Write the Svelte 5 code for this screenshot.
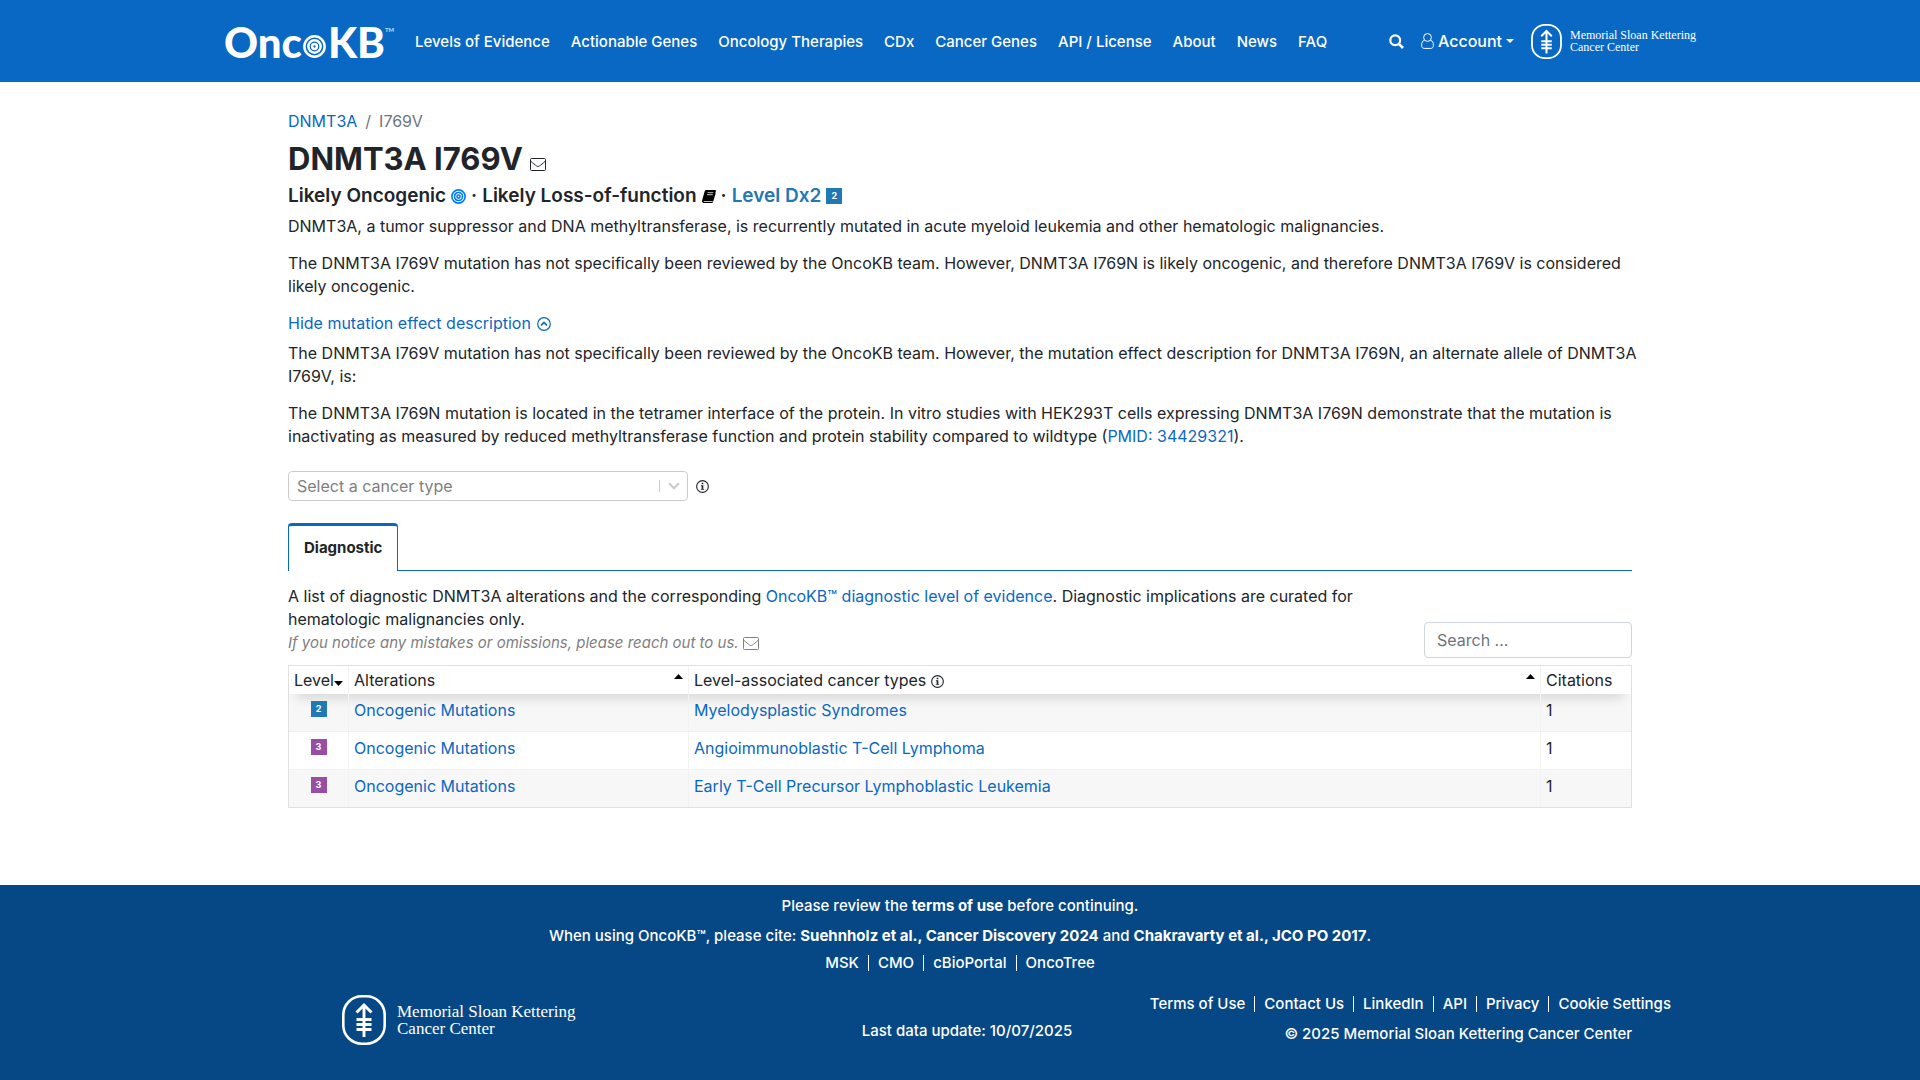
<script lang="ts">
    type Level = 2 | 3;

    const navLinks = [
        "Levels of Evidence",
        "Actionable Genes",
        "Oncology Therapies",
        "CDx",
        "Cancer Genes",
        "API / License",
        "About",
        "News",
        "FAQ",
    ];
    const partnerLinks = ["MSK", "CMO", "cBioPortal", "OncoTree"];
    const siteLinks = ["Terms of Use", "Contact Us", "LinkedIn", "API", "Privacy", "Cookie Settings"];

    const rows: { level: Level; alteration: string; cancerType: string; citations: number }[] = [
        { level: 2, alteration: "Oncogenic Mutations", cancerType: "Myelodysplastic Syndromes", citations: 1 },
        { level: 3, alteration: "Oncogenic Mutations", cancerType: "Angioimmunoblastic T-Cell Lymphoma", citations: 1 },
        { level: 3, alteration: "Oncogenic Mutations", cancerType: "Early T-Cell Precursor Lymphoblastic Leukemia", citations: 1 },
    ];

    let search = $state("");
    let showEffect = $state(true);

    const filtered = $derived(
        rows.filter((r) => (r.alteration + " " + r.cancerType).toLowerCase().includes(search.toLowerCase()))
    );
</script>

{#snippet target(size: number)}
    <svg class="target" width={size} height={size} viewBox="0 0 24 24" fill="none" stroke="currentColor" stroke-width="2.6" aria-hidden="true">
        <circle cx="12" cy="12" r="10.6" />
        <circle cx="12" cy="12" r="6.4" />
        <circle cx="12" cy="12" r="2.5" />
    </svg>
{/snippet}

{#snippet envelope()}
    <svg class="envelope" width="16" height="13" viewBox="0 0 16 13" fill="none" stroke="currentColor" aria-hidden="true">
        <rect x="0.5" y="0.5" width="15" height="12" rx="1" />
        <path d="M.8 3.200c2 2 4.500 3.800 5.800 4.800.9.600 1.900.600 2.800 0 1.300-1 3.800-2.800 5.800-4.800" />
    </svg>
{/snippet}

{#snippet info()}
    <svg class="info" width="13" height="13" viewBox="0 0 14 14" aria-hidden="true">
        <circle cx="7" cy="7" r="6.3" fill="none" stroke="currentColor" stroke-width="1.2" />
        <path fill="currentColor" d="M6.1 3h1.800v1.500H6.100zM5.300 5.600h2.600v4h.900v1H5.200v-1h.9V6.600h-.8z" />
    </svg>
{/snippet}

{#snippet mskMark(width: number, height: number)}
    <svg {width} {height} viewBox="0 0 44 50" fill="none" stroke="currentColor" aria-hidden="true">
        <rect x="1.3" y="1.3" width="41.4" height="47.4" rx="18.5" stroke-width="2.6" />
        <path d="M22 9v33M14.500 17.500L22 10l7.500 7.500M14.500 24.500h15M14.500 29.500h15M14.500 34.500h15" stroke-width="2.9" />
    </svg>
{/snippet}

<div class="page">
    <header>
        <div class="header-inner">
            <a class="logo" href="#home" aria-label="OncoKB">
                <span>Onc</span>{@render target(23)}<span>KB</span><sup>TM</sup>
            </a>
            <nav class="main-nav">
                {#each navLinks as link}
                    <a href="#nav">{link}</a>
                {/each}
            </nav>
            <div class="tools">
                <button class="icon-button" aria-label="Search">
                    <svg width="15" height="15" viewBox="0 0 15 15" fill="none" stroke="currentColor" aria-hidden="true">
                        <circle cx="6.2" cy="6.2" r="4.9" stroke-width="2.2" />
                        <path d="M9.800 9.800L14 14" stroke-width="2.6" />
                    </svg>
                </button>
                <button class="account">
                    <svg width="13" height="16" viewBox="0 0 13 16" fill="none" stroke="currentColor" aria-hidden="true">
                        <circle cx="6.5" cy="4.5" r="3.9" />
                        <path d="M3.400 7.300C1.300 7.800.6 10 .6 12.300c0 2 1 3.100 2.600 3.100h6.600c1.600 0 2.600-1.100 2.600-3.100 0-2.300-.7-4.500-2.800-5" />
                    </svg>
                    Account
                    <svg width="8" height="4" viewBox="0 0 8 4" aria-hidden="true"><path d="M0 0h8L4 4z" fill="currentColor" /></svg>
                </button>
                <a class="msk" href="#msk">
                    {@render mskMark(31, 35)}
                    <span>Memorial Sloan Kettering<br />Cancer Center</span>
                </a>
            </div>
        </div>
    </header>

    <main>
        <nav class="breadcrumb" aria-label="Breadcrumb">
            <a href="#gene">DNMT3A</a><span>/</span><span>I769V</span>
        </nav>
        <h1>DNMT3A I769V <a class="feedback" href="#feedback" aria-label="Send feedback">{@render envelope()}</a></h1>
        <h2>
            <span>Likely Oncogenic</span>
            <span class="oncogenic">{@render target(15)}</span>
            <span>·</span>
            <span>Likely Loss-of-function</span>
            <svg class="book" width="14" height="13" viewBox="0 0 14 13" aria-hidden="true">
                <path d="M4.300 0h8.800c.7 0 1 .5.8 1.100l-2.700 9.300c-.2.600-.6.900-1.200.900H2.300c-.7 0-.8.700-.1.700h8.300l2.800-9 .3.800-2.600 8.300c-.2.600-.6.900-1.200.9H1.900C.5 13-.3 11.800.1 10.600L2.600 1.500C2.800.6 3.400 0 4.300 0z" />
                <path d="M5.600 2.700h5.700M5 4.700h5.700" stroke="#fff" stroke-width="0.8" />
            </svg>
            <span>·</span>
            <a class="dx-level" href="#levels">Level Dx2</a>
            <span class="badge level-2">2</span>
        </h2>

        <p>DNMT3A, a tumor suppressor and DNA methyltransferase, is recurrently mutated in acute myeloid leukemia and other hematologic malignancies.</p>
        <p>
            The DNMT3A I769V mutation has not specifically been reviewed by the OncoKB team. However, DNMT3A I769N is likely oncogenic, and therefore DNMT3A I769V is considered<br />
            likely oncogenic.
        </p>
        <button class="toggle" aria-expanded={showEffect} onclick={() => (showEffect = !showEffect)}>
            {showEffect ? "Hide" : "Show"} mutation effect description
            <svg class:closed={!showEffect} width="14" height="14" viewBox="0 0 14 14" fill="none" stroke="currentColor" aria-hidden="true">
                <circle cx="7" cy="7" r="6.3" stroke-width="1.2" />
                <path d="M4 8.500l3-3 3 3" stroke-width="1.7" />
            </svg>
        </button>
        {#if showEffect}
            <p>
                The DNMT3A I769V mutation has not specifically been reviewed by the OncoKB team. However, the mutation effect description for DNMT3A I769N, an alternate allele of DNMT3A<br />
                I769V, is:
            </p>
            <p>
                The DNMT3A I769N mutation is located in the tetramer interface of the protein. In vitro studies with HEK293T cells expressing DNMT3A I769N demonstrate that the mutation is<br />
                inactivating as measured by reduced methyltransferase function and protein stability compared to wildtype (<a href="#pmid">PMID: 34429321</a>).
            </p>
        {/if}

        <div class="cancer-type">
            <div class="select-wrap">
                <select aria-label="Select a cancer type">
                    <option>Select a cancer type</option>
                    <option>Myelodysplastic Syndromes</option>
                </select>
                <svg width="12" height="8" viewBox="0 0 12 8" fill="none" stroke="#ccc" stroke-width="2.2" aria-hidden="true">
                    <path d="M1 1.200l5 5 5-5" />
                </svg>
            </div>
            {@render info()}
        </div>

        <div class="tabs" role="tablist">
            <button role="tab" aria-selected="true">Diagnostic</button>
        </div>

        <div class="table-intro">
            <div class="description">
                A list of diagnostic DNMT3A alterations and the corresponding <a href="#dx">OncoKB™ diagnostic level of evidence</a>. Diagnostic implications are curated for<br />
                hematologic malignancies only.
                <div class="omissions">If you notice any mistakes or omissions, please reach out to us. {@render envelope()}</div>
            </div>
            <input type="text" placeholder="Search ..." aria-label="Search table" bind:value={search} />
        </div>

        <table>
            <thead>
                <tr>
                    <th class="level">Level<svg class="sort" width="9" height="5" viewBox="0 0 9 5" aria-hidden="true"><path d="M0 0h9L4.500 5z" /></svg></th>
                    <th class="alteration">
                        <div>Alterations <svg class="sort" width="9" height="5" viewBox="0 0 9 5" aria-hidden="true"><path d="M0 5h9L4.500 0z" /></svg></div>
                    </th>
                    <th>
                        <div>
                            <span>Level-associated cancer types {@render info()}</span>
                            <svg class="sort" width="9" height="5" viewBox="0 0 9 5" aria-hidden="true"><path d="M0 5h9L4.500 0z" /></svg>
                        </div>
                    </th>
                    <th class="citations">Citations</th>
                </tr>
            </thead>
            <tbody>
                {#each filtered as row}
                    <tr>
                        <td class="level"><span class="badge level-{row.level}">{row.level}</span></td>
                        <td><a href="#alteration">{row.alteration}</a></td>
                        <td><a href="#cancer">{row.cancerType}</a></td>
                        <td>{row.citations}</td>
                    </tr>
                {/each}
            </tbody>
        </table>
    </main>

    <footer>
        <div>Please review the <a href="#terms"><b>terms of use</b></a> before continuing.</div>
        <div>
            When using OncoKB™, please cite: <a href="#cite"><b>Suehnholz et al., Cancer Discovery 2024</b></a> and
            <a href="#cite"><b>Chakravarty et al., JCO PO 2017</b></a>.
        </div>
        <div class="links">
            {#each partnerLinks as link}<a href="#partner">{link}</a>{/each}
        </div>
        <div class="footer-bottom">
            <a class="msk large" href="#msk">
                {@render mskMark(44, 50)}
                <span>Memorial Sloan Kettering<br />Cancer Center</span>
            </a>
            <div class="updated">Last data update: 10/07/2025</div>
            <div class="legal">
                <div class="links">
                    {#each siteLinks as link}<a href="#site">{link}</a>{/each}
                </div>
                <div class="copyright">© 2025 Memorial Sloan Kettering Cancer Center</div>
            </div>
        </div>
    </footer>
</div>

<style>
    :global(body) {
        background: #fff;
        color: #212529;
        font-family: Inter, "Noto Sans", sans-serif;
        font-size: 16px;
        line-height: 23px;
    }
    .page {
        min-height: 100vh;
        display: flex;
        flex-direction: column;
    }
    a {
        color: #0968c3;
        text-decoration: none;
    }
    button {
        font: inherit;
        background: none;
        border: 0;
        padding: 0;
        cursor: pointer;
    }
    header {
        background: #0968c3;
        color: #fff;
        padding: 0 24px;
    }
    .header-inner {
        max-width: 1472px;
        height: 82px;
        margin: 0 auto;
        display: flex;
        align-items: center;
    }
    header a, header button, footer a {
        color: #fff;
        white-space: nowrap;
    }
    .logo {
        display: flex;
        align-items: center;
        width: 191px;
        padding-top: 2px;
        font-family: Lato, sans-serif;
        font-size: 42px;
        font-weight: 900;
        line-height: 42px;
    }
    .logo .target {
        margin: 8px 2px 0 1px;
    }
    .logo sup {
        align-self: flex-start;
        font-size: 6px;
        line-height: 18px;
        font-weight: 400;
    }
    .main-nav {
        display: flex;
        gap: 21px;
        font-size: 15px;
        font-weight: 500;
    }
    .tools {
        display: flex;
        align-items: center;
        gap: 17px;
        margin-left: auto;
        font-weight: 500;
    }
    .icon-button {
        display: flex;
    }
    .account {
        display: flex;
        align-items: center;
        gap: 4px;
    }
    .msk {
        display: flex;
        align-items: center;
        gap: 8px;
        font-family: "Liberation Serif", serif;
        font-size: 12px;
        font-weight: 400;
        line-height: 12px;
    }
    .msk.large {
        gap: 11px;
        font-size: 17px;
        line-height: 17px;
    }
    main {
        width: 70%;
        margin: 0 auto;
        padding: 28px 0 76px;
    }
    .breadcrumb {
        display: flex;
        gap: 8px;
        color: #6c757d;
    }
    h1 {
        margin: 6px 0 0;
        font-size: 31px;
        line-height: 40px;
        font-weight: 700;
    }
    .feedback {
        color: #212529;
    }
    .feedback .envelope {
        vertical-align: -1px;
    }
    h2 {
        display: flex;
        align-items: center;
        gap: 5px;
        margin: 4px 0 6px;
        font-size: 19px;
        line-height: 26px;
        font-weight: 600;
    }
    .oncogenic {
        display: flex;
        color: #007bff;
    }
    .dx-level {
        color: #2078b4;
    }
    .badge {
        display: inline-block;
        width: 16px;
        height: 16px;
        color: #fff;
        font-size: 9px;
        font-weight: 700;
        line-height: 16px;
        text-align: center;
    }
    .level-2 {
        background: #2078b4;
    }
    .level-3 {
        background: #984ea3;
    }
    p {
        margin: 0 -12px 14px 0;
    }
    .toggle {
        display: flex;
        align-items: center;
        gap: 6px;
        margin-bottom: 7px;
        color: #0968c3;
    }
    .closed {
        transform: rotate(180deg);
    }
    .cancer-type {
        display: flex;
        align-items: center;
        gap: 8px;
        margin: 23px 0 22px;
    }
    .select-wrap {
        position: relative;
        width: 400px;
    }
    .select-wrap select {
        display: block;
        width: 100%;
        height: 30px;
        padding: 0 8px;
        appearance: none;
        border: 1px solid #ccc;
        border-radius: 4px;
        background: #fff;
        color: #808080;
        font: inherit;
    }
    .select-wrap svg {
        position: absolute;
        right: 0;
        top: 9px;
        padding: 2px 8px;
        border-left: 1px solid #ccc;
    }
    .tabs {
        display: flex;
        border-bottom: 1px solid #0968c3;
    }
    .tabs button {
        height: 48px;
        margin-bottom: -1px;
        padding: 0 15px 2px;
        border: 1px solid #0968c3;
        border-top-width: 3px;
        border-bottom: 0;
        border-radius: 4px 4px 0 0;
        background: #fff;
        color: #212529;
        font-size: 15px;
        font-weight: 700;
    }
    .table-intro {
        display: flex;
        justify-content: space-between;
        align-items: flex-end;
        padding: 14px 0 7px;
    }
    .description {
        padding-bottom: 4px;
    }
    .omissions {
        color: #808080;
        font-size: 15px;
        font-style: italic;
    }
    .omissions .envelope, th .info {
        vertical-align: -2px;
    }
    .table-intro input {
        box-sizing: border-box;
        width: 208px;
        height: 36px;
        padding: 0 12px;
        border: 1px solid #ced4da;
        border-radius: 4px;
        color: #495057;
        font: inherit;
    }
    .table-intro input::placeholder {
        color: #6c757d;
    }
    table {
        width: 100%;
        table-layout: fixed;
        border-collapse: separate;
        border-spacing: 0;
        border: 1px solid #dfe1e2;
    }
    thead {
        box-shadow: 0 12px 12px -8px rgba(0, 0, 0, 0.14);
    }
    th, td {
        border-right: 1px solid #f2f2f2;
        text-align: left;
    }
    th:last-child, td:last-child {
        border-right: 0;
    }
    th {
        height: 28px;
        padding: 0 5px;
        font-weight: 400;
    }
    th div {
        display: flex;
        justify-content: space-between;
    }
    th div .sort {
        margin-top: 5px;
    }
    th.level {
        width: 49px;
        white-space: nowrap;
    }
    .alteration {
        width: 329px;
    }
    .citations {
        width: 80px;
    }
    td {
        height: 31px;
        padding: 1px 5px 5px;
        border-bottom: 1px solid #f0f0f0;
    }
    td.level {
        text-align: center;
    }
    td .badge {
        vertical-align: 4px;
    }
    tbody tr:nth-child(odd) {
        background: rgba(0, 0, 0, 0.03);
    }
    tbody tr:last-child td {
        border-bottom: 0;
    }
    footer {
        margin-top: auto;
        padding: 9px 24px 35px;
        background: #064885;
        color: #fff;
        font-size: 15px;
        font-weight: 500;
        text-align: center;
    }
    footer > div + div {
        margin-top: 7px;
    }
    .links {
        display: flex;
        justify-content: center;
        line-height: 16px;
    }
    footer > .links {
        padding: 1px 0 24px;
    }
    .links a {
        padding: 0 9px;
    }
    .links a + a {
        border-left: 1px solid #fff;
    }
    .footer-bottom {
        max-width: 1440px;
        margin: 0 auto;
        display: grid;
        grid-template-columns: 1fr auto 1fr;
        align-items: end;
    }
    .footer-bottom .msk {
        margin-left: 102px;
        text-align: left;
    }
    .updated {
        padding: 0 0 3px 14px;
    }
    .legal {
        display: flex;
        flex-direction: column;
        align-items: flex-end;
        gap: 10px;
    }
    .copyright {
        padding-right: 48px;
    }
</style>
